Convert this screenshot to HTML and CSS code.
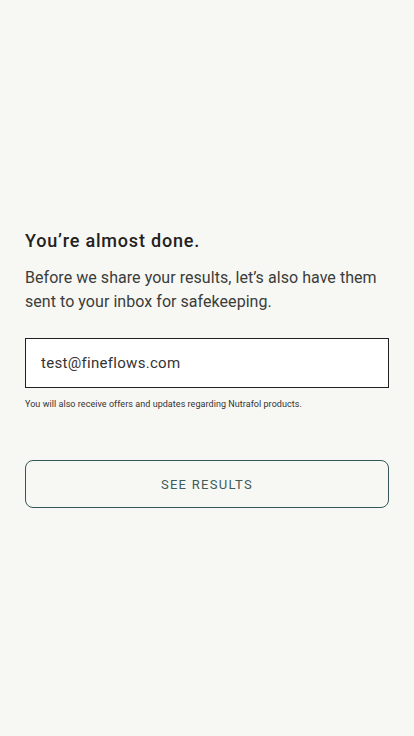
FILE: index.html
```html
<!DOCTYPE html>
<html lang="en">
<head>
  <meta charset="UTF-8" />
  <meta name="viewport" content="width=device-width, initial-scale=1.0"/>
  <title>Almost done</title>
  <link rel="stylesheet" href="styles.css">
</head>
<body>
  <main class="step">
    <h1 class="step-title">You’re almost done.</h1>
    <p class="step-text">Before we share your results, let’s also have them sent to your inbox for safekeeping.</p>

    <form class="email-form" onsubmit="return false">
      <input class="email-input" type="email" value="test@fineflows.com" />
      <p class="email-note">You will also receive offers and updates regarding Nutrafol products.</p>
      <button class="results-btn" type="submit">SEE RESULTS</button>
    </form>
  </main>
</body>
</html>
```

FILE: styles.css
```css
* { box-sizing: border-box; }
body {
  margin: 0;
  background: #f7f7f3;
  font-family: Roboto, 'Liberation Sans', sans-serif;
  color: #222;
}
.step {
  padding: 228px 25px 0;
}
.step-title {
  margin: 0;
  font-size: 18px;
  font-weight: 500;
  line-height: 26px;
  letter-spacing: 0.8px;
  color: #1f2220;
}
.step-text {
  margin: 12px 0 0;
  font-size: 16px;
  line-height: 24px;
  letter-spacing: 0.05px;
  color: #3a3d3b;
}
.email-form {
  margin-top: 24px;
}
.email-input {
  display: block;
  width: 100%;
  height: 50px;
  padding: 0 15px;
  border: 1px solid #222;
  border-radius: 0;
  background: #fff;
  font-family: inherit;
  font-size: 15px;
  letter-spacing: 0.3px;
  color: #333;
  outline: none;
}
.email-note {
  margin: 10px 0 0;
  font-size: 9px;
  line-height: 12px;
  letter-spacing: 0.05px;
  color: #333;
}
.results-btn {
  display: block;
  width: 100%;
  height: 48px;
  margin-top: 50px;
  border: 1px solid #35575a;
  border-radius: 8px;
  background: transparent;
  font-family: Roboto, sans-serif;
  font-size: 13px;
  letter-spacing: 1.3px;
  color: #3d5c5a;
  cursor: pointer;
}
```
